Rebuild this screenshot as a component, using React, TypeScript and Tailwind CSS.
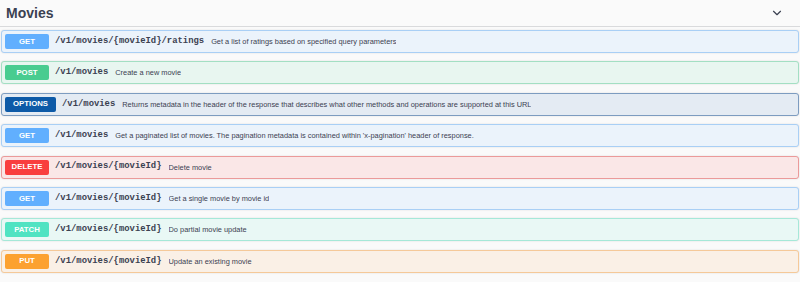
import { ChevronDown } from 'lucide-react';

type Op = {
  method: string;
  path: string;
  summary: string;
  badge: string;
  row: string;
  wide?: boolean;
};

const ops: Op[] = [
  {
    method: 'GET',
    path: '/v1/movies/{movieId}/ratings',
    summary: 'Get a list of ratings based on specified query parameters',
    badge: 'bg-[#61affe]',
    row: 'border-[#a9cff5] bg-[#ebf3fb]',
  },
  {
    method: 'POST',
    path: '/v1/movies',
    summary: 'Create a new movie',
    badge: 'bg-[#49cc90]',
    row: 'border-[#a3dfc3] bg-[#e8f6f0]',
  },
  {
    method: 'OPTIONS',
    path: '/v1/movies',
    summary:
      'Returns metadata in the header of the response that describes what other methods and operations are supported at this URL',
    badge: 'bg-[#0d5aa7]',
    row: 'border-[#7d9cc0] bg-[#e4ebf3]',
    wide: true,
  },
  {
    method: 'GET',
    path: '/v1/movies',
    summary:
      "Get a paginated list of movies. The pagination metadata is contained within 'x-pagination' header of response.",
    badge: 'bg-[#61affe]',
    row: 'border-[#a9cff5] bg-[#ebf3fb]',
  },
  {
    method: 'DELETE',
    path: '/v1/movies/{movieId}',
    summary: 'Delete movie',
    badge: 'bg-[#f93e3e]',
    row: 'border-[#eb9a9a] bg-[#fae7e7]',
  },
  {
    method: 'GET',
    path: '/v1/movies/{movieId}',
    summary: 'Get a single movie by movie id',
    badge: 'bg-[#61affe]',
    row: 'border-[#a9cff5] bg-[#ebf3fb]',
  },
  {
    method: 'PATCH',
    path: '/v1/movies/{movieId}',
    summary: 'Do partial movie update',
    badge: 'bg-[#50e3c2]',
    row: 'border-[#a6e8d8] bg-[#e9f8f5]',
  },
  {
    method: 'PUT',
    path: '/v1/movies/{movieId}',
    summary: 'Update an existing movie',
    badge: 'bg-[#fca130]',
    row: 'border-[#f5c999] bg-[#faf0e6]',
  },
];

function OpRow({ op }: { op: Op }) {
  return (
    <div
      className={`flex h-[23px] items-center rounded-[3px] border px-[3px] shadow-[0_0_2px_rgba(0,0,0,0.12)] ${op.row}`}
    >
      <span
        className={`flex h-[15px] shrink-0 items-center justify-center rounded-[2px] text-[7.8px] font-bold text-white ${op.badge} ${
          op.wide ? 'w-[51px]' : 'w-[44px]'
        }`}
      >
        {op.method}
      </span>
      <span className="ml-[6px] whitespace-nowrap font-['Liberation_Mono',monospace] text-[8.9px] font-bold text-[#3b4151]">
        {op.path}
      </span>
      <span className="ml-[7px] truncate text-[7.4px] text-[#3b4151]">{op.summary}</span>
    </div>
  );
}

export default function App() {
  return (
    <div className="h-[282px] w-[800px] overflow-hidden bg-[#fafafa] font-['Liberation_Sans',Arial,sans-serif]">
      <div className="flex h-[27px] items-center justify-between border-b border-[#d9dadc] pl-[6px] pr-[16px]">
        <h3 className="text-[14px] font-bold text-[#3b4151]">Movies</h3>
        <ChevronDown size={14} strokeWidth={2} className="text-[#3b4151]" />
      </div>
      <div className="mt-[3px] flex flex-col gap-[8.4px] px-[1px]">
        {ops.map((op, i) => (
          <OpRow key={i} op={op} />
        ))}
      </div>
    </div>
  );
}
